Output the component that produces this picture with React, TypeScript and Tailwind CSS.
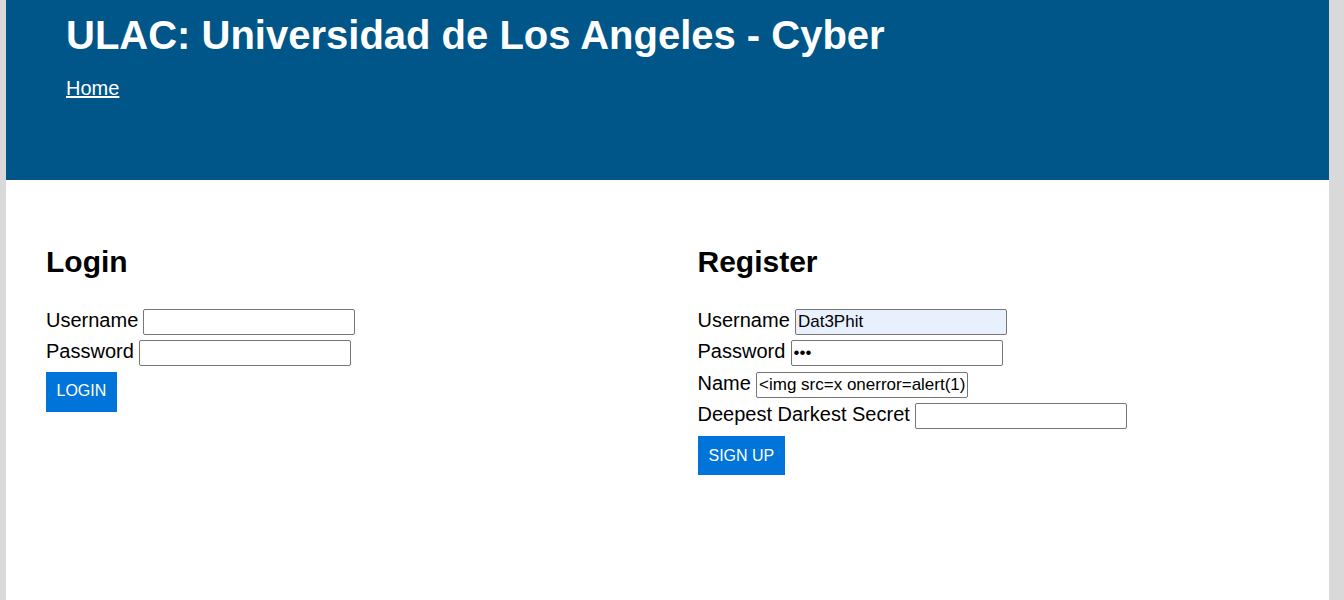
import React from "react";

const inputCls =
  "w-[212px] h-[26px] border border-[#767676] rounded-[2px] px-[2px] py-0 text-[17px] text-black bg-white outline-none";

function Row({ label, children }: { label: string; children: React.ReactNode }) {
  return (
    <div className="flex items-baseline gap-[5.2px] h-[31.33px]">
      <span className="text-[20px] leading-[23px] text-black">{label}</span>
      {children}
    </div>
  );
}

export default function App() {
  return (
    <div
      className="flex min-h-[600px] bg-[#d9d9d9] pl-[6px] pr-[15px]"
      style={{ fontFamily: '"Liberation Sans", Arial, sans-serif' }}
    >
      <div className="flex-1 bg-white min-h-[600px]">
        <header className="bg-[#005689] h-[180px] pl-[60px] pt-[11.5px]">
          <h1 className="text-[40px] leading-[46px] font-bold text-white">
            ULAC: Universidad de Los Angeles - Cyber
          </h1>
          <nav className="mt-[19px]">
            <a href="#" className="text-[20px] leading-[23px] text-white underline">
              Home
            </a>
          </nav>
        </header>
        <main className="px-[40px] pt-[64px] grid grid-cols-2 gap-x-[60px]">
          <section>
            <h2 className="text-[30px] leading-[35px] font-bold text-black">Login</h2>
            <form className="mt-[30px]" onSubmit={(e) => e.preventDefault()}>
              <Row label="Username">
                <input className={inputCls} type="text" />
              </Row>
              <Row label="Password">
                <input className={inputCls} type="password" />
              </Row>
              <button
                type="submit"
                className="mt-0 bg-[#0074d9] text-white text-[16px] leading-[18.4px] px-[10.5px] py-[10.8px]"
              >
                LOGIN
              </button>
            </form>
          </section>
          <section>
            <h2 className="text-[30px] leading-[35px] font-bold text-black">Register</h2>
            <form className="mt-[30px]" onSubmit={(e) => e.preventDefault()}>
              <Row label="Username">
                <input
                  className={inputCls + " !bg-[#e8f0fe]"}
                  type="text"
                  defaultValue="Dat3Phit"
                />
              </Row>
              <Row label="Password">
                <input className={inputCls} type="password" defaultValue="abc" />
              </Row>
              <Row label="Name">
                <input
                  className={inputCls}
                  type="text"
                  defaultValue="<img src=x onerror=alert(1)>"
                />
              </Row>
              <Row label="Deepest Darkest Secret">
                <input className={inputCls} type="text" />
              </Row>
              <button
                type="submit"
                className="mt-[2px] bg-[#0074d9] text-white text-[16px] leading-[18.4px] px-[11px] py-[10.3px]"
              >
                SIGN UP
              </button>
            </form>
          </section>
        </main>
      </div>
    </div>
  );
}
